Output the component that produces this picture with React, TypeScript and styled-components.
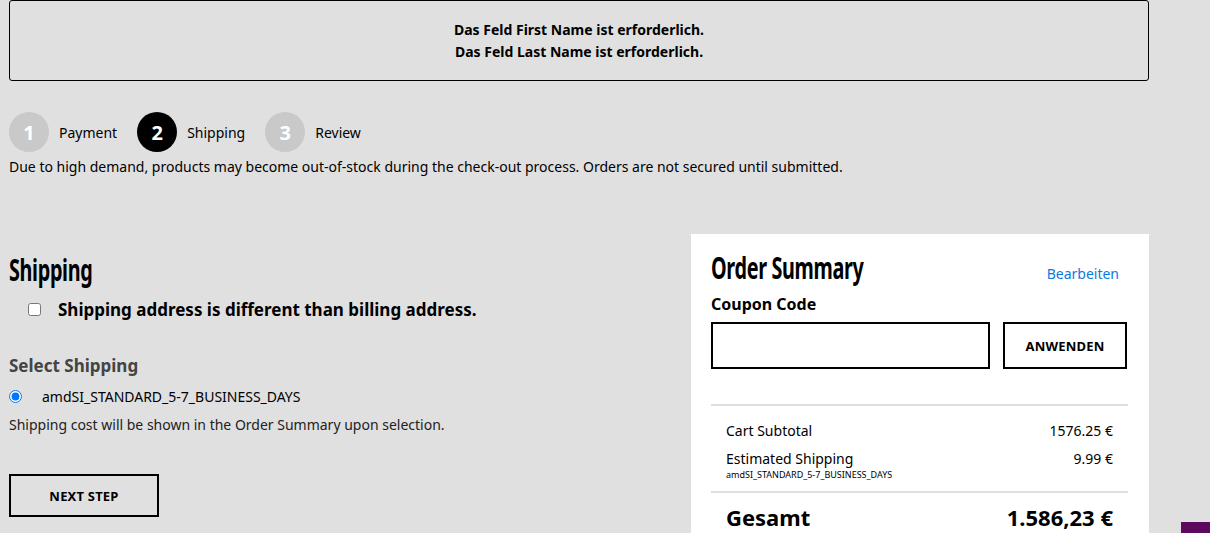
import styled, { createGlobalStyle } from "styled-components";

const GlobalStyle = createGlobalStyle`
  html, body {
    margin: 0;
    background: #e0e0e0;
    font-family: "Noto Sans", "Open Sans", sans-serif;
    color: #000;
  }
  * { box-sizing: border-box; }
`;

const Page = styled.div`
  width: 1149px;
  padding-left: 9px;
  height: 533px;
  overflow: hidden;
`;

const ErrorBox = styled.div`
  height: 81px;
  border: 1px solid #000;
  border-radius: 3px;
  padding-top: 18px;
  text-align: center;
  font-size: 14px;
  font-weight: 700;
  line-height: 22px;
`;

const Steps = styled.div`
  display: flex;
  align-items: center;
  margin-top: 31px;
`;

const Step = styled.div`
  display: flex;
  align-items: center;
  gap: 10px;
  margin-right: 20px;
  font-size: 14px;
`;

const Circle = styled.span<{ $active?: boolean }>`
  width: 40px;
  height: 40px;
  border-radius: 50%;
  display: flex;
  align-items: center;
  justify-content: center;
  background: ${(p) => (p.$active ? "#000" : "#c9c9c9")};
  color: #fff;
  font-size: 20px;
  font-weight: 700;
`;

const Notice = styled.p`
  margin: 4px 0 0;
  font-size: 14px;
  line-height: 22px;
`;

const Columns = styled.div`
  display: grid;
  grid-template-columns: 1fr 458px;
  gap: 24px;
  margin-top: 56px;
`;

const Left = styled.div`
  padding-top: 22px;
`;

const Heading = styled.h2`
  margin: 0;
  font-family: "Noto Sans", sans-serif;
  font-size: 30px;
  font-weight: 700;
  line-height: 28px;
  letter-spacing: -0.5px;
  transform: scaleX(0.66);
  transform-origin: left center;
  white-space: nowrap;
`;

const CheckRow = styled.label`
  display: flex;
  align-items: center;
  gap: 17px;
  margin: 14px 0 0 19px;
  font-size: 17px;
  font-weight: 700;
`;

const Check = styled.input`
  width: 13px;
  height: 13px;
  margin: 0;
`;

const SubHeading = styled.h3`
  margin: 33px 0 0;
  font-size: 17px;
  font-weight: 700;
  color: #444;
  line-height: 24px;
`;

const RadioRow = styled.label`
  display: flex;
  align-items: center;
  gap: 20px;
  margin-top: 9px;
  font-size: 14px;
`;

const Radio = styled.input`
  width: 13px;
  height: 13px;
  margin: 0;
`;

const Hint = styled.p`
  margin: 9px 0 0;
  font-size: 14px;
  color: #222;
`;

const OutlineButton = styled.button<{ $width: number; $height: number }>`
  width: ${(p) => p.$width}px;
  height: ${(p) => p.$height}px;
  border: 2px solid #000;
  background: transparent;
  font-family: "Noto Sans", sans-serif;
  font-size: 13px;
  font-weight: 700;
  letter-spacing: 0.2px;
  color: #000;
  padding: 0;
`;

const NextButton = styled(OutlineButton)`
  margin-top: 40px;
`;

const Summary = styled.aside`
  background: #fff;
  padding: 20px 20px 0;
  height: 300px;
`;

const SummaryHead = styled.div`
  display: flex;
  justify-content: space-between;
  align-items: flex-start;
`;

const EditLink = styled.a`
  color: #0a7ae0;
  font-size: 14px;
  line-height: 19px;
  margin: 10px 10px 0 0;
  cursor: pointer;
`;

const CouponLabel = styled.div`
  margin-top: 10px;
  font-size: 16px;
  line-height: 22px;
  font-weight: 700;
`;

const CouponRow = styled.div`
  display: flex;
  gap: 13px;
  margin-top: 7px;
  width: 416px;
`;

const CouponInput = styled.input`
  flex: 1;
  height: 47px;
  border: 2px solid #000;
  background: #fff;
`;

const Divider = styled.hr`
  width: 417px;
  border: 0;
  border-top: 2px solid #dedede;
  margin: 35px 0 0;
`;

const Rows = styled.div`
  padding: 15px 15px 0;
  width: 417px;
`;

const Row = styled.div`
  display: flex;
  justify-content: space-between;
  font-size: 14px;
  line-height: 19px;
  margin-bottom: 9px;
`;

const RowSub = styled.div`
  font-size: 9px;
  line-height: 10px;
  margin-top: 2px;
`;

const TotalDivider = styled(Divider)`
  margin-top: 11px;
`;

const Total = styled(Row)`
  font-size: 22px;
  font-weight: 700;
  line-height: 28px;
  margin-top: 10px;
  padding: 0 15px;
  width: 417px;
`;

const ChatTab = styled.div`
  position: fixed;
  right: 0;
  bottom: 0;
  width: 29px;
  height: 11px;
  background: #5c0a5e;
`;

export default function App() {
  return (
    <>
      <GlobalStyle />
      <Page>
        <ErrorBox>
          <div>Das Feld First Name ist erforderlich.</div>
          <div>Das Feld Last Name ist erforderlich.</div>
        </ErrorBox>
        <Steps>
          <Step>
            <Circle>1</Circle>Payment
          </Step>
          <Step>
            <Circle $active>2</Circle>Shipping
          </Step>
          <Step>
            <Circle>3</Circle>Review
          </Step>
        </Steps>
        <Notice>
          Due to high demand, products may become out-of-stock during the check-out process. Orders are not secured until submitted.
        </Notice>
        <Columns>
          <Left>
            <Heading>Shipping</Heading>
            <CheckRow>
              <Check type="checkbox" />
              Shipping address is different than billing address.
            </CheckRow>
            <SubHeading>Select Shipping</SubHeading>
            <RadioRow>
              <Radio type="radio" name="ship" defaultChecked />
              amdSI_STANDARD_5-7_BUSINESS_DAYS
            </RadioRow>
            <Hint>Shipping cost will be shown in the Order Summary upon selection.</Hint>
            <NextButton $width={150} $height={43}>NEXT STEP</NextButton>
          </Left>
          <Summary>
            <SummaryHead>
              <Heading>Order Summary</Heading>
              <EditLink>Bearbeiten</EditLink>
            </SummaryHead>
            <CouponLabel>Coupon Code</CouponLabel>
            <CouponRow>
              <CouponInput type="text" />
              <OutlineButton $width={124} $height={47}>ANWENDEN</OutlineButton>
            </CouponRow>
            <Divider />
            <Rows>
              <Row>
                <span>Cart Subtotal</span>
                <span>1576.25 €</span>
              </Row>
              <Row>
                <div>
                  Estimated Shipping
                  <RowSub>amdSI_STANDARD_5-7_BUSINESS_DAYS</RowSub>
                </div>
                <span>9.99 €</span>
              </Row>
            </Rows>
            <TotalDivider />
            <Total>
              <span>Gesamt</span>
              <span>1.586,23 €</span>
            </Total>
          </Summary>
        </Columns>
      </Page>
      <ChatTab />
    </>
  );
}
